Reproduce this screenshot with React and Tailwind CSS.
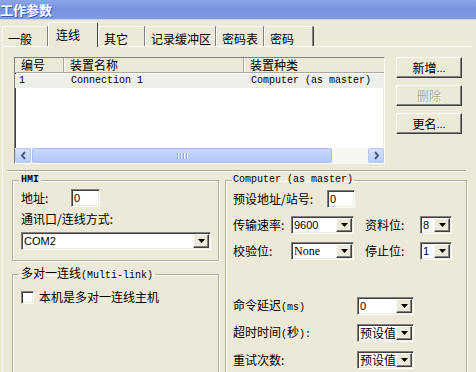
import React from "react";

const sunken =
  "border border-t-[#808080] border-l-[#808080] border-b-white border-r-white shadow-[inset_1px_1px_0_#404040,inset_-1px_-1px_0_#ece9d8]";
const raised =
  "bg-[#ece9d8] border border-t-white border-l-white border-b-[#404040] border-r-[#404040] shadow-[inset_-1px_-1px_0_#808080]";
const group =
  "border border-[#b0ad9e] shadow-[inset_1px_1px_0_#ffffff,1px_1px_0_#ffffff] min-w-0 m-0 p-0";
const mono = "font-['Liberation_Mono',monospace]";

const tabs = [
  { label: "一般", w: "w-[46px]" },
  { label: "连线", w: "w-[50px]", active: true },
  { label: "其它", w: "w-[47px]" },
  { label: "记录缓冲区", w: "w-[71px]" },
  { label: "密码表", w: "w-[48px]" },
  { label: "密码", w: "w-[49px]" },
];

const DropArrow = () => (
  <div className={`ml-auto mr-[1px] h-[14px] w-[16px] shrink-0 flex items-center justify-center ${raised}`}>
    <svg width="7" height="4" viewBox="0 0 7 4">
      <path d="M0 0h7L3.5 4z" fill="#000" />
    </svg>
  </div>
);

const Combo = ({ w, children, textClass = "font-['Liberation_Sans',sans-serif] text-[11px]" }) => (
  <div className={`flex items-center h-[18px] bg-white shrink-0 ${w} ${sunken}`}>
    <span className={`pl-[2px] leading-[14px] text-black ${textClass}`}>{children}</span>
    <DropArrow />
  </div>
);

const Edit = ({ w }) => (
  <div className={`flex items-center h-[18px] bg-white shrink-0 ${w} ${sunken}`}>
    <span className="pl-[2px] font-['Liberation_Sans',sans-serif] text-[11px] leading-[14px]">0</span>
  </div>
);

const ScrollBtn = ({ left }) => (
  <div className="w-[16px] h-[15px] shrink-0 rounded-[2px] bg-gradient-to-b from-[#d6e2fd] to-[#b8cbf8] border border-[#b5c8f3] flex items-center justify-center">
    <svg width="7" height="9" viewBox="0 0 7 9">
      <path
        d={left ? "M5 1L2 4.5 5 8" : "M2 1l3 3.5L2 8"}
        fill="none"
        stroke="#4d6185"
        strokeWidth="2"
      />
    </svg>
  </div>
);

const Btn = ({ children, disabled }) => (
  <div
    className={`w-[66px] h-[21px] flex items-center justify-center text-[12px] ${raised} ${
      disabled ? "text-[#aca899] [text-shadow:1px_1px_0_#fff]" : "text-black"
    }`}
  >
    {children}
  </div>
);

export default function App() {
  return (
    <div className="w-[476px] h-[372px] overflow-hidden bg-[#ece9d8] text-black font-['Noto_Sans_CJK_SC',sans-serif] text-[12px] leading-[14px]">
      {/* title bar */}
      <div className="h-[20px] bg-gradient-to-b from-[#8ba5e8] via-[#7793df] to-[#7f9be2] border-b border-[#c5d3f3] flex items-center">
        <span className="text-white font-bold text-[13px] leading-[16px] [text-shadow:1px_1px_0_#3d5cb8]">工作参数</span>
      </div>

      {/* tabs */}
      <div className="flex items-end h-[26px] pl-[2px]">
        {tabs.map((t) =>
          t.active ? (
            <div
              key={t.label}
              className={`${t.w} h-[25px] -mb-[1px] relative z-10 bg-[#ece9d8] border-t border-l border-r border-t-white border-l-white border-r-[#404040] rounded-t-[2px] pl-[7px] pt-[5px]`}
            >
              {t.label}
            </div>
          ) : (
            <div
              key={t.label}
              className={`${t.w} h-[20px] border-t border-l border-r border-t-white border-l-white border-r-[#808080] shadow-[1px_0_0_#404040] rounded-t-[2px] pl-[5px] pt-[5px]`}
            >
              {t.label}
            </div>
          )
        )}
      </div>

      {/* panel */}
      <div className="ml-[2px] w-[470px] h-[330px] border-t border-l border-white">
        <div className="flex mt-[10px]">
          {/* list view */}
          <div className={`ml-[11px] w-[371px] h-[107px] bg-white flex flex-col ${sunken}`}>
            <div className="flex h-[15px] bg-[#ece9d8] border-b border-[#aca899] shrink-0">
              <div className="w-[49px] pl-[6px] border-r border-[#aca899] shadow-[1px_0_0_#fff]">编号</div>
              <div className="w-[180px] pl-[6px] border-r border-[#aca899] shadow-[1px_0_0_#fff]">装置名称</div>
              <div className="flex-1 pl-[6px]">装置种类</div>
            </div>
            <div className="flex-1 pt-[1px]">
              <div className={`flex h-[14px] items-center bg-[#efefea] ${mono} text-[10px]`}>
                <div className="w-[49px] pl-[4px]">1</div>
                <div className="w-[180px] pl-[7px]">Connection 1</div>
                <div className="flex-1 pl-[7px]">Computer (as master)</div>
              </div>
            </div>
            <div className="flex h-[15px] bg-[#f7f6f1] shrink-0">
              <ScrollBtn left />
              <div className="ml-[1px] w-[300px] h-[15px] rounded-[2px] bg-gradient-to-b from-[#c9d8fc] to-[#b3c7f7] border border-[#a8bdf1] flex items-center justify-center gap-[1px]">
                <div className="w-[1px] h-[6px] bg-[#8fa8e6] shadow-[1px_0_0_#eef3fe]" />
                <div className="w-[1px] h-[6px] bg-[#8fa8e6] shadow-[1px_0_0_#eef3fe] ml-[1px]" />
                <div className="w-[1px] h-[6px] bg-[#8fa8e6] shadow-[1px_0_0_#eef3fe] ml-[1px]" />
                <div className="w-[1px] h-[6px] bg-[#8fa8e6] shadow-[1px_0_0_#eef3fe] ml-[1px]" />
              </div>
              <div className="flex-1" />
              <ScrollBtn />
            </div>
          </div>

          {/* buttons */}
          <div className="ml-[11px] flex flex-col gap-[7px]">
            <Btn>
              新增<span className="font-['Liberation_Sans',sans-serif] text-[11px]">...</span>
            </Btn>
            <Btn disabled>删除</Btn>
            <Btn>
              更名<span className="font-['Liberation_Sans',sans-serif] text-[11px]">...</span>
            </Btn>
          </div>
        </div>

        {/* separator */}
        <div className="ml-[4px] mt-[6px] w-[459px] h-[2px] border-t border-[#aca899] border-b border-b-white" />

        <div className="flex">
          {/* left column */}
          <div className="ml-[9px] w-[207px] mt-[2px] flex flex-col">
            <fieldset className={group}>
              <legend className={`ml-[6px] px-[2px] leading-[12px] ${mono} text-[10px] font-bold`}>HMI</legend>
              <div className="pl-[8px] pb-[10px]">
                <div className="mt-[3px] flex items-center h-[18px]">
                  <span className="w-[50px]">地址:</span>
                  <Edit w="w-[29px]" />
                </div>
                <div className="mt-[5px] h-[14px]">通讯口/连线方式:</div>
                <div className="mt-[6px]">
                  <Combo w="w-[190px]">COM2</Combo>
                </div>
              </div>
            </fieldset>

            <fieldset className={`${group} mt-[6px] h-[140px]`}>
              <legend className="ml-[6px] px-[2px] leading-[12px]">
                多对一连线<span className={`${mono} text-[10px]`}>(Multi-link)</span>
              </legend>
              <div className="pl-[8px] mt-[8px] flex items-center">
                <div className={`w-[13px] h-[13px] bg-white ${sunken}`} />
                <span className="ml-[5px]">本机是多对一连线主机</span>
              </div>
            </fieldset>
          </div>

          {/* right column */}
          <div className="ml-[6px] w-[242px] mt-[2px]">
            <fieldset className={`${group} h-[220px]`}>
              <legend className={`ml-[6px] px-[1px] leading-[12px] ${mono} text-[10px]`}>Computer (as master)</legend>
              <div className="pl-[7px]">
                <div className="mt-[4px] flex items-center h-[18px]">
                  <span className="w-[94px]">预设地址/站号:</span>
                  <Edit w="w-[28px]" />
                </div>
                <div className="mt-[8px] flex items-center h-[18px]">
                  <span className="w-[58px]">传输速率:</span>
                  <Combo w="w-[63px]">9600</Combo>
                  <span className="ml-[11px] w-[55px]">资料位:</span>
                  <Combo w="w-[32px]">8</Combo>
                </div>
                <div className="mt-[8px] flex items-center h-[18px]">
                  <span className="w-[58px]">校验位:</span>
                  <Combo w="w-[63px]" textClass="font-['Liberation_Serif',serif] text-[12px]">
                    None
                  </Combo>
                  <span className="ml-[11px] w-[55px]">停止位:</span>
                  <Combo w="w-[32px]">1</Combo>
                </div>
                <div className="mt-[37px] flex items-center h-[18px]">
                  <span className="w-[124px]">
                    命令延迟<span className={`${mono} text-[10px]`}>(ms)</span>
                  </span>
                  <Combo w="w-[57px]">0</Combo>
                </div>
                <div className="mt-[9px] flex items-center h-[18px]">
                  <span className="w-[124px]">
                    超时时间<span className={`${mono} text-[10px]`}>(</span>秒<span className={`${mono} text-[10px]`}>):</span>
                  </span>
                  <Combo w="w-[57px]" textClass="text-[12px]">预设值</Combo>
                </div>
                <div className="mt-[9px] flex items-center h-[18px]">
                  <span className="w-[124px]">重试次数:</span>
                  <Combo w="w-[57px]" textClass="text-[12px]">预设值</Combo>
                </div>
              </div>
            </fieldset>
          </div>
        </div>
      </div>
    </div>
  );
}
